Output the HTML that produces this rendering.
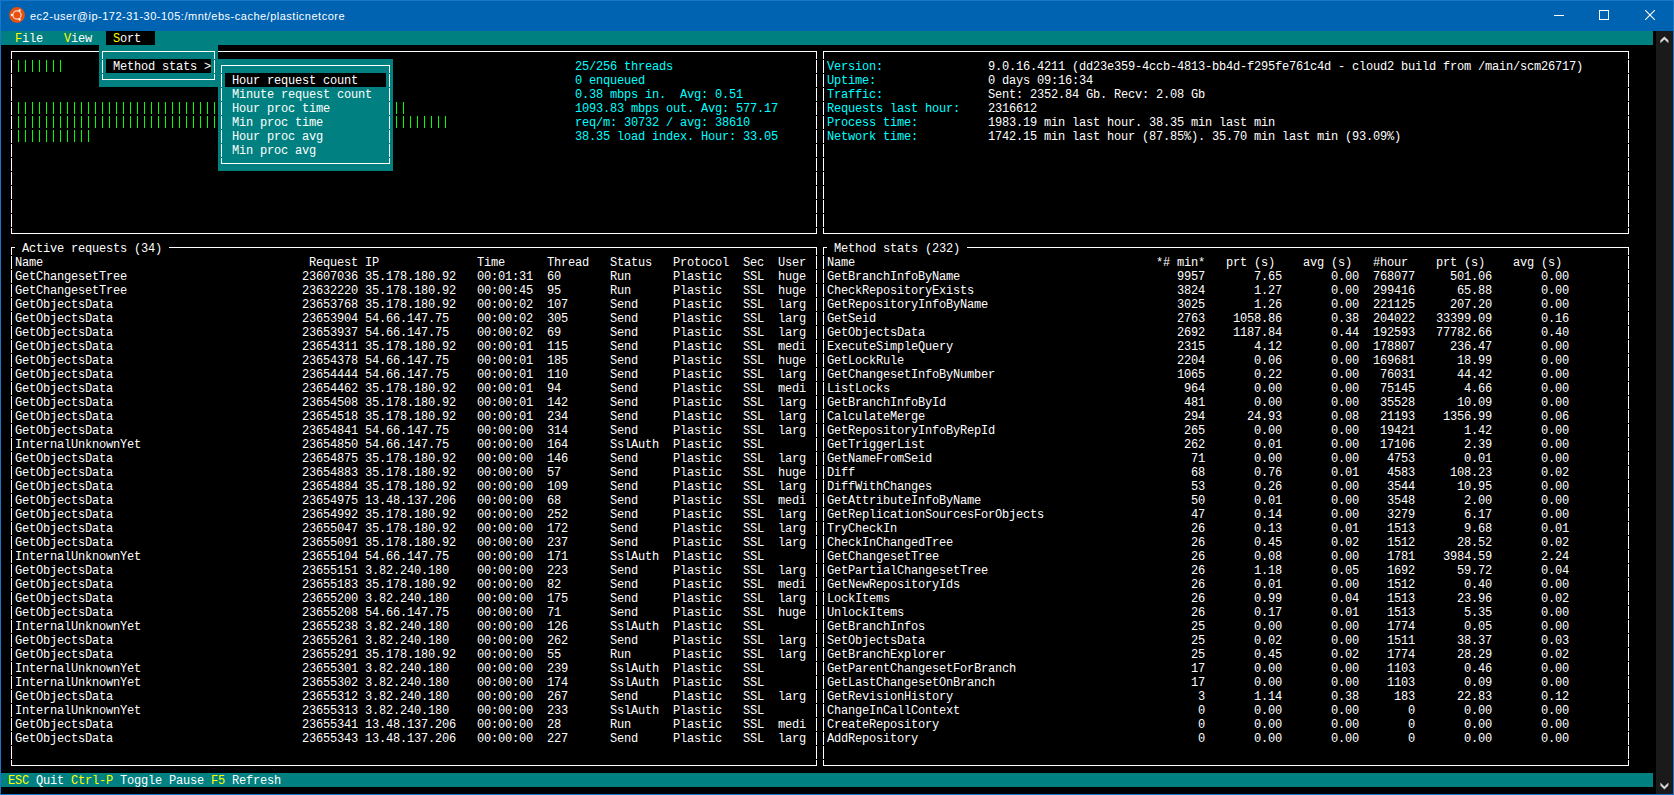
<!DOCTYPE html>
<html><head><meta charset="utf-8"><style>
html,body{margin:0;padding:0;}
body{width:1674px;height:795px;overflow:hidden;position:relative;background:#000;}
div{position:absolute;}
pre{position:absolute;margin:0;font-family:"Liberation Mono",monospace;font-size:12px;line-height:14px;letter-spacing:-0.2011px;color:#ffffff;white-space:pre;}
i{font-style:normal;}
.y{color:#ffff00}.c{color:#00ffff}
#title{position:absolute;left:0;top:0;width:1674px;height:31px;background:#0063b1;}
#tt{position:absolute;left:30px;top:8px;font-family:"Liberation Sans",sans-serif;font-size:11px;letter-spacing:0.5px;line-height:16px;color:#fff;white-space:pre;}
</style></head><body>
<div id="title"><svg style="position:absolute;left:9px;top:7px" width="16" height="16" viewBox="0 0 16 16">
<circle cx="8" cy="8" r="7.9" fill="#e9500e"/>
<circle cx="8" cy="8" r="4.1" fill="none" stroke="#f6d8cc" stroke-width="1.2"/>
<circle cx="2.9" cy="8" r="1.15" fill="#fff"/>
<circle cx="10.6" cy="3.5" r="1.15" fill="#fff"/>
<circle cx="10.6" cy="12.5" r="1.15" fill="#fff"/>
</svg><div id="tt">ec2-user@ip-172-31-30-105:/mnt/ebs-cache/plasticnetcore</div>
<div style="left:1554px;top:15px;width:10px;height:1px;background:#fff"></div>
<div style="left:1599px;top:10px;width:8px;height:8px;border:1px solid #fff"></div>
<svg style="position:absolute;left:1645px;top:10px" width="10" height="10" viewBox="0 0 10 10"><path d="M0 0L10 10M10 0L0 10" stroke="#fff" stroke-width="1.1"/></svg>
</div>
<div style="left:0;top:0;width:1674px;height:1px;background:#1c76c8"></div>
<div style="left:1px;top:31px;width:1652px;height:14px;background:#008080"></div>
<div style="left:1px;top:773px;width:1652px;height:14px;background:#008080"></div>
<div style="left:106px;top:31px;width:49px;height:14px;background:#000"></div>
<div style="left:11px;top:51px;width:806px;height:1px;background:#ffffff;"></div>
<div style="left:11px;top:233px;width:806px;height:1px;background:#ffffff;"></div>
<div style="left:11px;top:51px;width:1px;height:183px;background:linear-gradient(to bottom,transparent 1px,#fff 1px);background-size:1px 14px;background-position:0 8px"></div>
<div style="left:816px;top:51px;width:1px;height:183px;background:linear-gradient(to bottom,transparent 1px,#fff 1px);background-size:1px 14px;background-position:0 8px"></div>
<div style="left:823px;top:51px;width:806px;height:1px;background:#ffffff;"></div>
<div style="left:823px;top:233px;width:806px;height:1px;background:#ffffff;"></div>
<div style="left:823px;top:51px;width:1px;height:183px;background:linear-gradient(to bottom,transparent 1px,#fff 1px);background-size:1px 14px;background-position:0 8px"></div>
<div style="left:1628px;top:51px;width:1px;height:183px;background:linear-gradient(to bottom,transparent 1px,#fff 1px);background-size:1px 14px;background-position:0 8px"></div>
<div style="left:11px;top:247px;width:806px;height:1px;background:#ffffff;"></div>
<div style="left:11px;top:765px;width:806px;height:1px;background:#ffffff;"></div>
<div style="left:11px;top:247px;width:1px;height:519px;background:linear-gradient(to bottom,transparent 1px,#fff 1px);background-size:1px 14px;background-position:0 8px"></div>
<div style="left:816px;top:247px;width:1px;height:519px;background:linear-gradient(to bottom,transparent 1px,#fff 1px);background-size:1px 14px;background-position:0 8px"></div>
<div style="left:823px;top:247px;width:806px;height:1px;background:#ffffff;"></div>
<div style="left:823px;top:765px;width:806px;height:1px;background:#ffffff;"></div>
<div style="left:823px;top:247px;width:1px;height:519px;background:linear-gradient(to bottom,transparent 1px,#fff 1px);background-size:1px 14px;background-position:0 8px"></div>
<div style="left:1628px;top:247px;width:1px;height:519px;background:linear-gradient(to bottom,transparent 1px,#fff 1px);background-size:1px 14px;background-position:0 8px"></div>
<div style="left:15px;top:60px;width:49px;height:12px;background:linear-gradient(to right,transparent 3px,#00ff00 3px,#00ff00 4px,transparent 4px);background-size:7px 12px"></div>
<div style="left:15px;top:102px;width:392px;height:12px;background:linear-gradient(to right,transparent 3px,#00ff00 3px,#00ff00 4px,transparent 4px);background-size:7px 12px"></div>
<div style="left:15px;top:116px;width:434px;height:12px;background:linear-gradient(to right,transparent 3px,#00ff00 3px,#00ff00 4px,transparent 4px);background-size:7px 12px"></div>
<div style="left:15px;top:130px;width:77px;height:12px;background:linear-gradient(to right,transparent 3px,#00ff00 3px,#00ff00 4px,transparent 4px);background-size:7px 12px"></div>
<div style="left:15px;top:246px;width:154px;height:3px;background:#000"></div>
<div style="left:827px;top:246px;width:140px;height:3px;background:#000"></div>
<pre style="left:8px;top:32px"> <i class="y">F</i>ile   <i class="y">V</i>iew   <i class="y">S</i>ort

                                                                                 <i class="c">25/256 threads                      Version:               </i>9.0.16.4211 (dd23e359-4ccb-4813-bb4d-f295fe761c4d - cloud2 build from /main/scm26717)
                                                                                 <i class="c">0 enqueued                          Uptime:                </i>0 days 09:16:34
                                                                                 <i class="c">0.38 mbps in.  Avg: 0.51            Traffic:               </i>Sent: 2352.84 Gb. Recv: 2.08 Gb
                                                                                 <i class="c">1093.83 mbps out. Avg: 577.17       Requests last hour:    </i>2316612
                                                                                 <i class="c">req/m: 30732 / avg: 38610           Process time:          </i>1983.19 min last hour. 38.35 min last min
                                                                                 <i class="c">38.35 load index. Hour: 33.05       Network time:          </i>1742.15 min last hour (87.85%). 35.70 min last min (93.09%)







  Active requests (34)                                                                                                Method stats (232)
 Name                                      Request IP              Time      Thread   Status   Protocol  Sec  User   Name                                           *# min*   prt (s)    avg (s)   #hour    prt (s)    avg (s)
 GetChangesetTree                         23607036 35.178.180.92   00:01:31  60       Run      Plastic   SSL  huge   GetBranchInfoByName                               9957       7.65       0.00  768077     501.06       0.00
 GetChangesetTree                         23632220 35.178.180.92   00:00:45  95       Run      Plastic   SSL  huge   CheckRepositoryExists                             3824       1.27       0.00  299416      65.88       0.00
 GetObjectsData                           23653768 35.178.180.92   00:00:02  107      Send     Plastic   SSL  larg   GetRepositoryInfoByName                           3025       1.26       0.00  221125     207.20       0.00
 GetObjectsData                           23653904 54.66.147.75    00:00:02  305      Send     Plastic   SSL  larg   GetSeid                                           2763    1058.86       0.38  204022   33399.09       0.16
 GetObjectsData                           23653937 54.66.147.75    00:00:02  69       Send     Plastic   SSL  larg   GetObjectsData                                    2692    1187.84       0.44  192593   77782.66       0.40
 GetObjectsData                           23654311 35.178.180.92   00:00:01  115      Send     Plastic   SSL  medi   ExecuteSimpleQuery                                2315       4.12       0.00  178807     236.47       0.00
 GetObjectsData                           23654378 54.66.147.75    00:00:01  185      Send     Plastic   SSL  huge   GetLockRule                                       2204       0.06       0.00  169681      18.99       0.00
 GetObjectsData                           23654444 54.66.147.75    00:00:01  110      Send     Plastic   SSL  larg   GetChangesetInfoByNumber                          1065       0.22       0.00   76031      44.42       0.00
 GetObjectsData                           23654462 35.178.180.92   00:00:01  94       Send     Plastic   SSL  medi   ListLocks                                          964       0.00       0.00   75145       4.66       0.00
 GetObjectsData                           23654508 35.178.180.92   00:00:01  142      Send     Plastic   SSL  larg   GetBranchInfoById                                  481       0.00       0.00   35528      10.09       0.00
 GetObjectsData                           23654518 35.178.180.92   00:00:01  234      Send     Plastic   SSL  larg   CalculateMerge                                     294      24.93       0.08   21193    1356.99       0.06
 GetObjectsData                           23654841 54.66.147.75    00:00:00  314      Send     Plastic   SSL  larg   GetRepositoryInfoByRepId                           265       0.00       0.00   19421       1.42       0.00
 InternalUnknownYet                       23654850 54.66.147.75    00:00:00  164      SslAuth  Plastic   SSL         GetTriggerList                                     262       0.01       0.00   17106       2.39       0.00
 GetObjectsData                           23654875 35.178.180.92   00:00:00  146      Send     Plastic   SSL  larg   GetNameFromSeid                                     71       0.00       0.00    4753       0.01       0.00
 GetObjectsData                           23654883 35.178.180.92   00:00:00  57       Send     Plastic   SSL  huge   Diff                                                68       0.76       0.01    4583     108.23       0.02
 GetObjectsData                           23654884 35.178.180.92   00:00:00  109      Send     Plastic   SSL  larg   DiffWithChanges                                     53       0.26       0.00    3544      10.95       0.00
 GetObjectsData                           23654975 13.48.137.206   00:00:00  68       Send     Plastic   SSL  medi   GetAttributeInfoByName                              50       0.01       0.00    3548       2.00       0.00
 GetObjectsData                           23654992 35.178.180.92   00:00:00  252      Send     Plastic   SSL  larg   GetReplicationSourcesForObjects                     47       0.14       0.00    3279       6.17       0.00
 GetObjectsData                           23655047 35.178.180.92   00:00:00  172      Send     Plastic   SSL  larg   TryCheckIn                                          26       0.13       0.01    1513       9.68       0.01
 GetObjectsData                           23655091 35.178.180.92   00:00:00  237      Send     Plastic   SSL  larg   CheckInChangedTree                                  26       0.45       0.02    1512      28.52       0.02
 InternalUnknownYet                       23655104 54.66.147.75    00:00:00  171      SslAuth  Plastic   SSL         GetChangesetTree                                    26       0.08       0.00    1781    3984.59       2.24
 GetObjectsData                           23655151 3.82.240.180    00:00:00  223      Send     Plastic   SSL  larg   GetPartialChangesetTree                             26       1.18       0.05    1692      59.72       0.04
 GetObjectsData                           23655183 35.178.180.92   00:00:00  82       Send     Plastic   SSL  medi   GetNewRepositoryIds                                 26       0.01       0.00    1512       0.40       0.00
 GetObjectsData                           23655200 3.82.240.180    00:00:00  175      Send     Plastic   SSL  larg   LockItems                                           26       0.99       0.04    1513      23.96       0.02
 GetObjectsData                           23655208 54.66.147.75    00:00:00  71       Send     Plastic   SSL  huge   UnlockItems                                         26       0.17       0.01    1513       5.35       0.00
 InternalUnknownYet                       23655238 3.82.240.180    00:00:00  126      SslAuth  Plastic   SSL         GetBranchInfos                                      25       0.00       0.00    1774       0.05       0.00
 GetObjectsData                           23655261 3.82.240.180    00:00:00  262      Send     Plastic   SSL  larg   SetObjectsData                                      25       0.02       0.00    1511      38.37       0.03
 GetObjectsData                           23655291 35.178.180.92   00:00:00  55       Run      Plastic   SSL  larg   GetBranchExplorer                                   25       0.45       0.02    1774      28.29       0.02
 InternalUnknownYet                       23655301 3.82.240.180    00:00:00  239      SslAuth  Plastic   SSL         GetParentChangesetForBranch                         17       0.00       0.00    1103       0.46       0.00
 InternalUnknownYet                       23655302 3.82.240.180    00:00:00  174      SslAuth  Plastic   SSL         GetLastChangesetOnBranch                            17       0.00       0.00    1103       0.09       0.00
 GetObjectsData                           23655312 3.82.240.180    00:00:00  267      Send     Plastic   SSL  larg   GetRevisionHistory                                   3       1.14       0.38     183      22.83       0.12
 InternalUnknownYet                       23655313 3.82.240.180    00:00:00  233      SslAuth  Plastic   SSL         ChangeInCallContext                                  0       0.00       0.00       0       0.00       0.00
 GetObjectsData                           23655341 13.48.137.206   00:00:00  28       Run      Plastic   SSL  medi   CreateRepository                                     0       0.00       0.00       0       0.00       0.00
 GetObjectsData                           23655343 13.48.137.206   00:00:00  227      Send     Plastic   SSL  larg   AddRepository                                        0       0.00       0.00       0       0.00       0.00


<i class="y">ESC </i>Quit <i class="y">Ctrl-P </i>Toggle Pause <i class="y">F5 </i>Refresh</pre>
<div style="left:99px;top:45px;width:119px;height:42px;background:#008080;"></div>
<div style="left:106px;top:59px;width:105px;height:14px;background:#000;"></div>
<div style="left:218px;top:59px;width:175px;height:112px;background:#008080;"></div>
<div style="left:225px;top:73px;width:161px;height:14px;background:#000;"></div>
<div style="left:102px;top:51px;width:113px;height:1px;background:#fff"></div>
<div style="left:102px;top:79px;width:113px;height:1px;background:#fff"></div>
<div style="left:102px;top:51px;width:1px;height:29px;background:linear-gradient(to bottom,transparent 1px,#fff 1px);background-size:1px 14px;background-position:0 8px"></div>
<div style="left:214px;top:51px;width:1px;height:29px;background:linear-gradient(to bottom,transparent 1px,#fff 1px);background-size:1px 14px;background-position:0 8px"></div>
<div style="left:221px;top:65px;width:169px;height:1px;background:#fff"></div>
<div style="left:221px;top:163px;width:169px;height:1px;background:#fff"></div>
<div style="left:221px;top:65px;width:1px;height:99px;background:linear-gradient(to bottom,transparent 1px,#fff 1px);background-size:1px 14px;background-position:0 8px"></div>
<div style="left:389px;top:65px;width:1px;height:99px;background:linear-gradient(to bottom,transparent 1px,#fff 1px);background-size:1px 14px;background-position:0 8px"></div>
<pre class="t" style="left:106px;top:60px"> Method stats &gt;</pre>
<pre class="t" style="left:232px;top:74px">Hour request count</pre>
<pre class="t" style="left:232px;top:88px">Minute request count</pre>
<pre class="t" style="left:232px;top:102px">Hour proc time</pre>
<pre class="t" style="left:232px;top:116px">Min proc time</pre>
<pre class="t" style="left:232px;top:130px">Hour proc avg</pre>
<pre class="t" style="left:232px;top:144px">Min proc avg</pre>
<div style="left:1656px;top:31px;width:17px;height:763px;background:#1a1a1a"></div>
<svg style="position:absolute;left:1659px;top:35px" width="11" height="10" viewBox="0 0 11 10"><path d="M1.4 8.2L1.4 5.2L5.4 1.4L9.4 5.2L9.4 8.2L5.4 4.6Z" fill="#d4d4d4"/></svg>
<svg style="position:absolute;left:1659px;top:781px" width="11" height="10" viewBox="0 0 11 10"><path d="M1.4 1.6L1.4 4.6L5.4 8.4L9.4 4.6L9.4 1.6L5.4 5.4Z" fill="#d4d4d4"/></svg>
<div style="left:0;top:0;width:1px;height:795px;background:#1c76c8"></div>
<div style="left:1673px;top:0;width:1px;height:795px;background:#1c76c8"></div>
<div style="left:0;top:794px;width:1674px;height:1px;background:#1c76c8"></div>
</body></html>
